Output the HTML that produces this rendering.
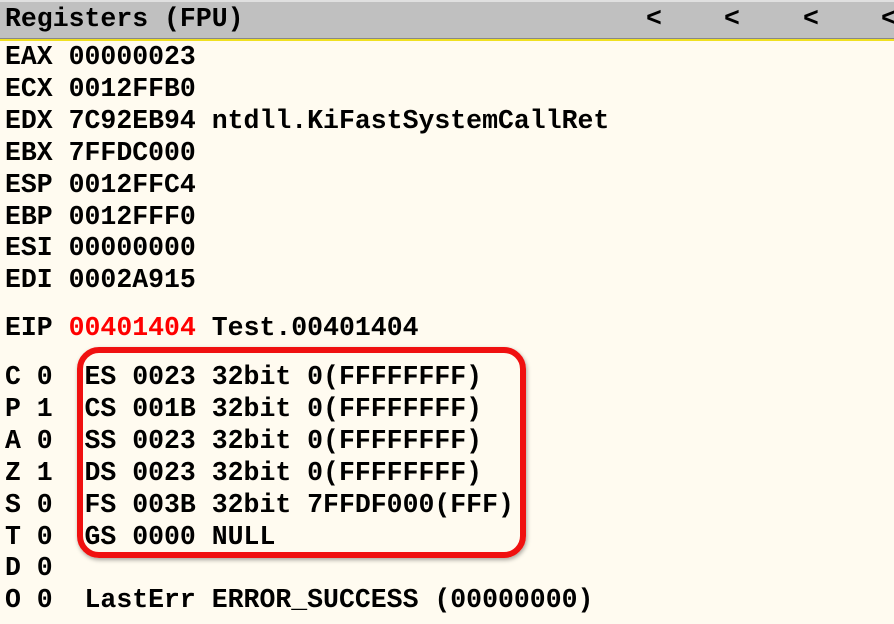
<!DOCTYPE html>
<html><head><style>
body{margin:0;width:894px;height:624px;background:#fffbf0;overflow:hidden;position:relative;font-family:"Liberation Mono",monospace;font-weight:bold;font-size:26.5px;color:#000}
.hdr{position:absolute;left:0;top:0;width:894px;height:36px;background:#c0c0c0;border-top:2px solid #e0e0e0;border-bottom:1px solid #888}
.yl{position:absolute;left:0;top:39px;width:894px;height:2px;background:#f0e020}
.t{position:absolute;left:5px;white-space:pre;line-height:31.9px}
.r{color:#f00}
.box{position:absolute;left:77px;top:347px;width:437px;height:199px;border:6px solid #f01010;border-radius:22px;box-shadow:1px 2px 4px rgba(0,0,0,.35)}
</style></head><body>
<div class="hdr"></div><div class="yl"></div>
<div class="t" style="top:4px">Registers (FPU)</div>
<div class="t" style="top:4px;left:646px">&lt;</div>
<div class="t" style="top:4px;left:724px">&lt;</div>
<div class="t" style="top:4px;left:803px">&lt;</div>
<div class="t" style="top:4px;left:881px">&lt;</div>
<div class="t" style="top:42px">EAX 00000023
ECX 0012FFB0
EDX 7C92EB94 ntdll.KiFastSystemCallRet
EBX 7FFDC000
ESP 0012FFC4
EBP 0012FFF0
ESI 00000000
EDI 0002A915</div>
<div class="t" style="top:313px">EIP <span class="r">00401404</span> Test.00401404</div>
<div class="t" style="top:362px">C 0  ES 0023 32bit 0(FFFFFFFF)
P 1  CS 001B 32bit 0(FFFFFFFF)
A 0  SS 0023 32bit 0(FFFFFFFF)
Z 1  DS 0023 32bit 0(FFFFFFFF)
S 0  FS 003B 32bit 7FFDF000(FFF)
T 0  GS 0000 NULL
D 0
O 0  LastErr ERROR_SUCCESS (00000000)</div>
<div class="box"></div>
</body></html>
